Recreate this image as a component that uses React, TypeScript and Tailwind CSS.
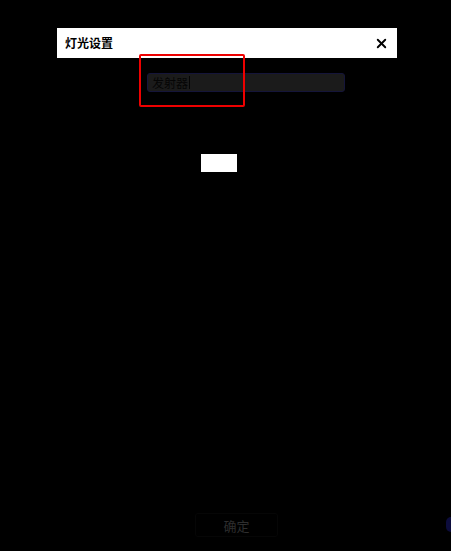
import { X } from "lucide-react";

const App = () => {
  return (
    <div
      className="relative flex h-[551px] w-full flex-col overflow-hidden bg-black"
      style={{ fontFamily: '"Noto Sans CJK SC", "Noto Sans", sans-serif' }}
    >
      {/* Dialog header */}
      <div className="ml-[57px] mt-[28px] flex h-[30px] w-[340px] items-center justify-between bg-white pl-2 pr-[8px]">
        <span className="text-[12px] font-bold leading-none text-black">灯光设置</span>
        <X className="h-[15px] w-[15px] text-black" strokeWidth={3} />
      </div>

      {/* Input */}
      <div className="ml-[147px] mt-[15px] flex h-[19px] w-[198px] items-center rounded-[3px] border border-[#15153a] bg-[#1b1b1b] pl-[4px]">
        <span className="text-[12px] leading-none text-[#050505]">发射器</span>
        <span className="ml-[1px] h-[13px] w-px bg-[#050505]" />
      </div>

      {/* White block */}
      <div className="ml-[201px] mt-[62px] h-[18px] w-[36px] bg-white" />

      {/* Confirm button */}
      <div className="mb-[14px] ml-[195px] mt-auto flex h-[24px] w-[83px] items-center justify-center rounded-[3px] border border-[#060606]">
        <span className="text-[13px] leading-none text-[#2e2e2e]">确定</span>
      </div>

      {/* Annotation box */}
      <div className="absolute left-[139px] top-[54px] h-[53px] w-[106px] rounded-[2px] border-2 border-[#ee0000]" />

      {/* Edge marker */}
      <div className="absolute left-[446px] top-[517px] h-[15px] w-[10px] rounded-full bg-[#0c0c3c]" />
    </div>
  );
};

export default App;
